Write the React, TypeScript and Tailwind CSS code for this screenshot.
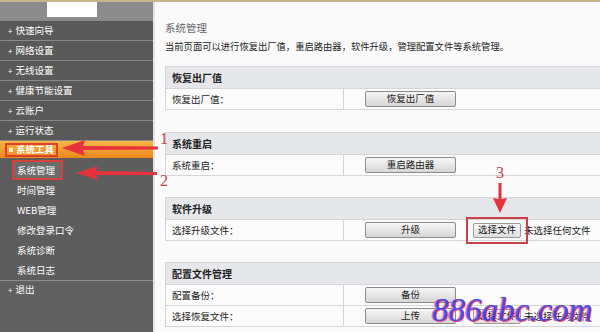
import React from "react";

const font = "font-['Noto_Sans_CJK_SC','Noto_Sans',sans-serif]";

const menuTop = ["快速向导", "网络设置", "无线设置", "健康节能设置", "云账户", "运行状态"];
const subMenu = ["系统管理", "时间管理", "WEB管理", "修改登录口令", "系统诊断", "系统日志"];

function Btn({ children }: { children: React.ReactNode }) {
  return (
    <button className="w-[91px] h-[16px] border border-[#8c8c8c] rounded-[2px] bg-gradient-to-b from-[#f7f7f7] to-[#d6d6d6] text-[9.5px] leading-none text-[#222]">
      {children}
    </button>
  );
}

function FileInput() {
  return (
    <div className="flex items-center ml-[17px]">
      <button className="h-[15px] px-[4px] border border-[#9a9a9a] rounded-[2px] bg-gradient-to-b from-[#fafafa] to-[#dedede] text-[9.5px] leading-none text-[#111]">
        选择文件
      </button>
      <span className="ml-[3px] text-[9.5px] text-[#222]">未选择任何文件</span>
    </div>
  );
}

function Row({ label, children }: { label: string; children: React.ReactNode }) {
  return (
    <div className="flex h-[21px] border-t border-[#d5d5d5] bg-[#fbfbfb]">
      <div className="w-[178px] shrink-0 pl-[6px] flex items-center border-r border-[#d5d5d5] text-[9.5px] text-[#222]">
        {label}
      </div>
      <div className="flex items-center pl-[21px]">{children}</div>
    </div>
  );
}

function Section({ title, children, className = "" }: { title: string; children: React.ReactNode; className?: string }) {
  return (
    <div className={`w-[460px] border border-[#d5d5d5] ${className}`}>
      <div className="h-[21px] bg-[#e6e7eb] flex items-center pl-[6px] text-[10px] font-bold text-[#222]">
        {title}
      </div>
      {children}
    </div>
  );
}

export default function App() {
  return (
    <div className={`relative w-[600px] h-[332px] overflow-hidden flex flex-col bg-[#fafafa] ${font}`}>
      <div className="h-[2px] bg-[#c9b48b] shrink-0" />
      <div className="flex flex-1 min-h-0">
        {/* Sidebar */}
        <aside className="w-[153px] shrink-0 flex flex-col bg-[#616161] text-white text-[9.5px]">
          <div className="h-[18px] bg-[#8c8c8c] pl-[47px]">
            <div className="w-[50px] h-[15px] bg-white" />
          </div>
          {menuTop.map((m) => (
            <div key={m} className="h-[20px] border-t border-[#8a8a8a] bg-[#595959] flex items-center pl-[8px]">
              <span className="text-[8px] mr-[3px]">+</span>
              {m}
            </div>
          ))}
          <div className="h-[18px] border-t border-[#8a8a8a] bg-gradient-to-b from-[#f8b648] to-[#ea871a] flex items-center pl-[5px]">
            <span className="flex items-center border-2 border-[#e0402a] h-[14px] px-[2px] font-bold">
              <span className="w-[4px] h-[4px] bg-[#fff2c0] mr-[3px]" />
              系统工具
            </span>
          </div>
          <div className="bg-[#5d5d5d] pt-[2px]">
            {subMenu.map((m, i) => (
              <div key={m} className="h-[20px] flex items-center pl-[12px]">
                {i === 0 ? (
                  <span className="h-[20px] w-[51px] flex items-center pl-[3px] border-2 border-[#d8403a] bg-[#6c6c6c]">{m}</span>
                ) : (
                  <span className="pl-[5px]">{m}</span>
                )}
              </div>
            ))}
          </div>
          <div className="h-[18px] border-t border-[#8e8e8e] flex items-center pl-[8px]">
            <span className="text-[8px] mr-[3px]">+</span>
            退出
          </div>
        </aside>
        <div className="w-[2px] bg-[#e4e4e4] shrink-0" />

        {/* Content */}
        <main className="flex-1 pl-[10px] pt-[18px] overflow-hidden">
          <div className="h-[16px] leading-[16px] text-[10.5px] text-[#666]">系统管理</div>
          <div className="mt-[2px] h-[16px] leading-[16px] text-[9.3px] text-[#222] whitespace-nowrap">
            当前页面可以进行恢复出厂值，重启路由器，软件升级，管理配置文件等系统管理。
          </div>
          <Section title="恢复出厂值" className="mt-[12px]">
            <Row label="恢复出厂值：">
              <Btn>恢复出厂值</Btn>
            </Row>
          </Section>
          <Section title="系统重启" className="mt-[22px]">
            <Row label="系统重启：">
              <Btn>重启路由器</Btn>
            </Row>
          </Section>
          <Section title="软件升级" className="mt-[21px]">
            <Row label="选择升级文件：">
              <Btn>升级</Btn>
              <div className="relative">
                <FileInput />
                <div className="absolute left-[10px] top-[-6px] w-[62px] h-[27px] border-2 border-[#c8424a]" />
              </div>
            </Row>
          </Section>
          <Section title="配置文件管理" className="mt-[21px]">
            <Row label="配置备份：">
              <Btn>备份</Btn>
            </Row>
            <Row label="选择恢复文件：">
              <Btn>上传</Btn>
              <FileInput />
            </Row>
          </Section>
        </main>
      </div>

      {/* Annotation arrows */}
      <svg className="absolute inset-0 pointer-events-none" width="600" height="332" viewBox="0 0 600 332">
        <polygon points="62,148 85,140 83,146 158,146.5 158,149.5 83,150 85,156" fill="#e6333b" />
        <polygon points="76,173 98,166 96,171 157,172 157,175 96,175 98,180" fill="#e6333b" />
        <polygon points="498.5,183 501.5,183 501.5,199 507,198 500,213 493,198 498.5,199" fill="#e6333b" />
      </svg>
      <span className="absolute left-[160px] top-[131px] text-[16px] leading-none text-[#c4424c] font-['Liberation_Serif',serif]">1</span>
      <span className="absolute left-[160px] top-[173px] text-[16px] leading-none text-[#c4424c] font-['Liberation_Serif',serif]">2</span>
      <span className="absolute left-[496px] top-[165px] text-[16px] leading-none text-[#c4424c] font-['Liberation_Serif',serif]">3</span>

      {/* Watermark */}
      <span className="absolute left-[432px] top-[294px] text-[33px] leading-none italic text-[#3140f0] font-['Liberation_Serif',serif] [text-shadow:1px_1px_0_#ff3a5a,-1px_0_0_#ff6a80] opacity-90">
        886abc.com
      </span>
    </div>
  );
}
